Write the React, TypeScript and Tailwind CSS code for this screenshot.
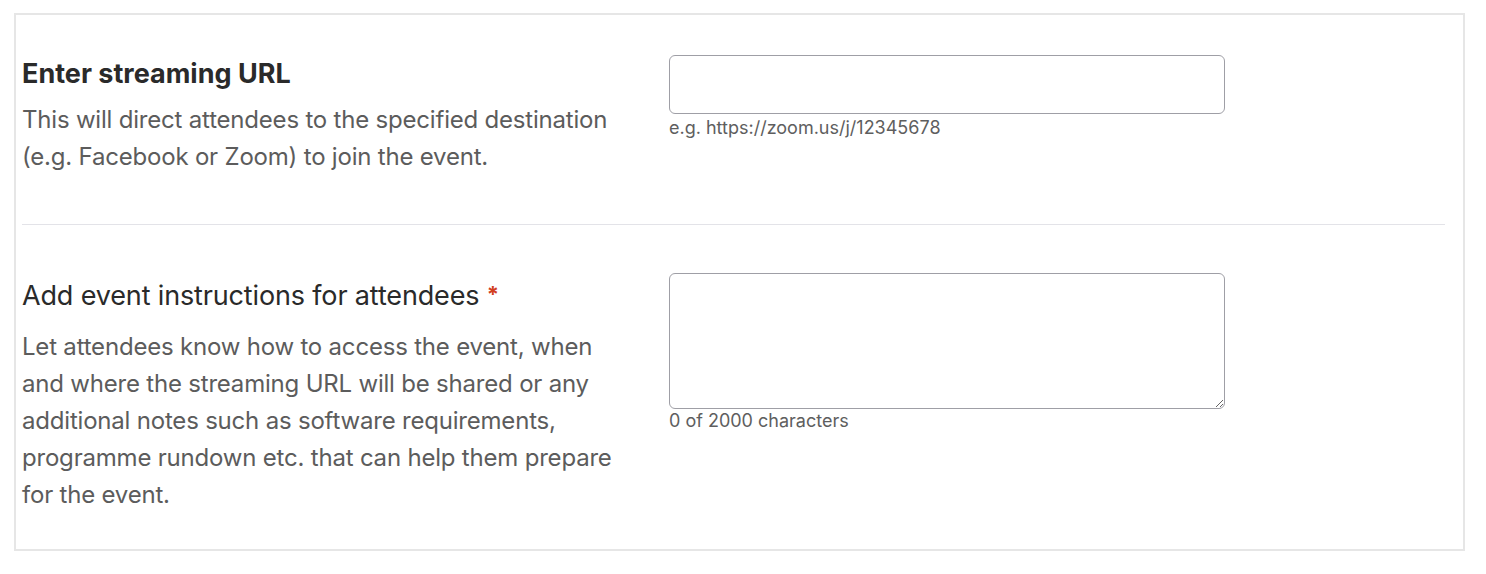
import React from "react";

export default function App() {
  return (
    <div className="min-h-[574px] w-[1486px] bg-white pl-[14px] pr-[21px] pt-[13px]" style={{ fontFamily: "Inter, 'Noto Sans', sans-serif" }}>
      <div className="h-[538px] border-2 border-[#e6e6e6] bg-white pl-[6px] pr-[18px]">
        <div className="flex h-[210px] border-b border-[#e3e3e8] pt-[40px]">
          <div className="w-[647px] pt-[2px]">
            <h2 className="text-[27px] font-bold leading-[34px] text-[#2a2a2a]">Enter streaming URL</h2>
            <p className="mt-[10px] w-[616px] text-[24px] leading-[37px] tracking-[-0.2px] text-[#5c5c5c]">
              This will direct attendees to the specified destination (e.g. Facebook or Zoom) to join the event.
            </p>
          </div>
          <div className="w-[556px]">
            <input className="block h-[59px] w-[556px] rounded-[6px] border border-[#9f9fa6] bg-white px-3 outline-none" />
            <div className="mt-[3px] text-[18px] leading-[22px] text-[#5e5e5e]">e.g. https://zoom.us/j/12345678</div>
          </div>
        </div>
        <div className="flex pt-[48px]">
          <div className="w-[647px] pt-[6px]">
            <h2 className="text-[27px] font-normal leading-[34px] tracking-[-0.15px] text-[#2a2a2a]">
              Add event instructions for attendees <span className="relative -top-[3px] text-[22px] font-bold text-[#d23f1f]">*</span>
            </h2>
            <p className="mt-[14px] w-[616px] text-[24px] leading-[37px] tracking-[-0.2px] text-[#5c5c5c]">
              Let attendees know how to access the event, when and where the streaming URL will be shared or any additional notes such as software requirements, programme rundown etc. that can help them prepare for the event.
            </p>
          </div>
          <div className="w-[556px]">
            <textarea className="block h-[136px] w-[556px] resize-y rounded-[6px] border border-[#9f9fa6] bg-white px-3 outline-none" />
            <div className="mt-[1px] text-[18px] leading-[22px] text-[#5e5e5e]">0 of 2000 characters</div>
          </div>
        </div>
      </div>
    </div>
  );
}
